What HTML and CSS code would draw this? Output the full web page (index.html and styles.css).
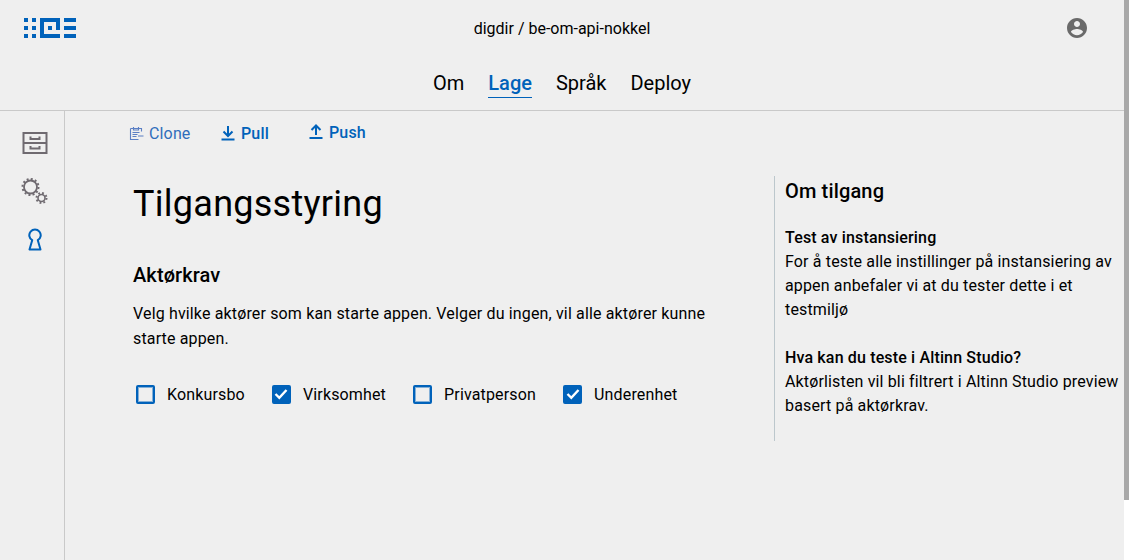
FILE: index.html
```html
<!DOCTYPE html>
<html lang="no">
<head>
<meta charset="utf-8">
<title>Tilgangsstyring</title>
<link rel="stylesheet" href="styles.css">
</head>
<body>
<div class="page">
<div class="app">
  <header class="topbar">
    <svg class="logo" width="52" height="20" viewBox="0 0 52 20" fill="#0062ba">
      <path d="M0 0h4v4H0zM8 0h4v4H8zM0 8h4v4H0zM8 8h4v4H8zM0 16h4v4H0zM8 16h4v4H8z"/>
      <path d="M16 0h20v12h-4V4H20v12h16v4H16z"/>
      <path d="M24 8h4v4h-4z"/>
      <path d="M40 0h12v4H40zM40 8h12v4H40zM40 16h12v4H40z"/>
    </svg>
    <div class="repo">digdir / be-om-api-nokkel</div>
    <svg class="avatar" width="24" height="24" viewBox="0 0 24 24" fill="#6a6a6a">
      <path d="M12 2C6.48 2 2 6.48 2 12s4.48 10 10 10 10-4.48 10-10S17.52 2 12 2zm0 3c1.66 0 3 1.34 3 3s-1.34 3-3 3-3-1.34-3-3 1.34-3 3-3zm0 14.2c-2.5 0-4.71-1.28-6-3.22.03-1.99 4-3.08 6-3.08s5.97 1.09 6 3.08c-1.29 1.94-3.5 3.22-6 3.22z"/>
    </svg>
  </header>
  <nav class="tabs">
    <a class="tab">Om</a>
    <a class="tab tab-active">Lage</a>
    <a class="tab">Språk</a>
    <a class="tab">Deploy</a>
  </nav>
  <div class="body">
    <aside class="side">
      <svg width="26" height="24" viewBox="0 0 26 24" fill="none" stroke="#6f6a70" stroke-width="2">
        <rect x="1.500" y="2" width="23" height="20"/>
        <path d="M1.500 12h23M8.500 5.500v2.500h9V5.500M8.500 15v2.500h9V15"/>
      </svg>
      <svg width="28" height="28" viewBox="0 0 28 28" fill="none" stroke="#6f6a70">
        <circle cx="9.500" cy="10" r="6.500" stroke-width="1.800"/>
        <circle cx="9.500" cy="10" r="8" stroke-width="2" stroke-dasharray="2 2.190"/>
        <circle cx="20.500" cy="21" r="3.500" stroke-width="1.600"/>
        <circle cx="20.500" cy="21" r="5" stroke-width="2" stroke-dasharray="1.800 2.130"/>
      </svg>
      <svg width="14" height="24" viewBox="0 0 14 24" fill="none" stroke="#0062ba" stroke-width="2">
        <path d="M1.500 22.500h11l-2.700-9.300a5.700 5.700 0 1 0-5.600 0z" stroke-linejoin="round"/>
      </svg>
    </aside>
    <main class="main">
      <div class="actions">
        <a class="action action-plain">
          <svg width="15" height="15" viewBox="0 0 15 15" fill="none" stroke="#5b7fc4" stroke-width="1.100"><path d="M1.500 2.500h11v3M1.500 2.500v11h8M4.500 1v3h5V1M3.500 6.500h7M3.500 8.500h5M3.500 10.500h4M9 10h5.500"/></svg>
          <span>Clone</span>
        </a>
        <a class="action action-pull">
          <svg width="16" height="16" viewBox="0 0 16 16" fill="none" stroke="#0062ba" stroke-width="2"><path d="M8 1v10M3.500 6.500 8 11l4.500-4.500M1.500 14.500h13"/></svg>
          <span>Pull</span>
        </a>
        <a class="action action-push">
          <svg width="16" height="16" viewBox="0 0 16 16" fill="none" stroke="#0062ba" stroke-width="2"><path d="M8 11V1.500M3.500 6 8 1.500 12.500 6M1.500 14h13"/></svg>
          <span>Push</span>
        </a>
      </div>
      <div class="columns">
        <section class="content">
          <h1>Tilgangsstyring</h1>
          <h2>Aktørkrav</h2>
          <p class="lead">Velg hvilke aktører som kan starte appen. Velger du ingen, vil alle aktører kunne starte appen.</p>
          <div class="checks">
            <label class="check"><span class="box"></span>Konkursbo</label>
            <label class="check"><span class="box box-on"><svg width="14" height="12" viewBox="0 0 14 12" fill="none" stroke="#fff" stroke-width="2.400"><path d="M1.500 6l3.800 3.800L12.500 2"/></svg></span>Virksomhet</label>
            <label class="check"><span class="box"></span>Privatperson</label>
            <label class="check"><span class="box box-on"><svg width="14" height="12" viewBox="0 0 14 12" fill="none" stroke="#fff" stroke-width="2.400"><path d="M1.500 6l3.800 3.800L12.500 2"/></svg></span>Underenhet</label>
          </div>
        </section>
        <aside class="info">
          <h3>Om tilgang</h3>
          <p><strong>Test av instansiering</strong><br>For å teste alle instillinger på instansiering av appen anbefaler vi at du tester dette i et testmiljø</p>
          <p><strong>Hva kan du teste i Altinn Studio?</strong><br>Aktørlisten vil bli filtrert i Altinn Studio preview basert på aktørkrav.</p>
        </aside>
      </div>
    </main>
  </div>
</div>
<div class="scrollbar"><div class="thumb"></div></div>
</div>
</body>
</html>
```
FILE: styles.css
```css
body {
  margin: 0;
  background: #efefef;
  color: #000;
  font-family: Roboto, "Liberation Sans", sans-serif;
  font-size: 16px;
  letter-spacing: 0.15px;
}
.page {
  display: flex;
  height: 100vh;
  overflow: hidden;
}
.app {
  flex: 1;
  min-width: 0;
  display: flex;
  flex-direction: column;
}
.scrollbar {
  width: 5px;
  flex: none;
  background: #fff;
}
.thumb {
  height: 500px;
  background: #a8a8a8;
}
.topbar {
  height: 56px;
  flex: none;
  display: grid;
  grid-template-columns: 1fr auto 1fr;
  align-items: center;
  padding: 0 24px;
}
.avatar {
  justify-self: end;
  margin-right: 11px;
}
.repo {
  letter-spacing: 0;
}
.tabs {
  flex: none;
  height: 38px;
  display: flex;
  justify-content: center;
  gap: 24px;
  border-bottom: 1px solid #c9c9c9;
  padding-top: 16px;
}
.tab {
  font-size: 20px;
  height: 25px;
  line-height: 23px;
  letter-spacing: 0;
}
.tab-active {
  color: #0062ba;
  font-weight: 500;
  border-bottom: 1px solid #0062ba;
}
.body {
  flex: 1;
  display: flex;
}
.side {
  width: 65px;
  box-sizing: border-box;
  border-right: 1px solid #c9c9c9;
  display: flex;
  flex-direction: column;
  align-items: center;
  padding-top: 20px;
  padding-left: 5px;
  gap: 22px;
}
.main {
  flex: 1;
  min-width: 0;
}
.actions {
  display: flex;
  align-items: center;
  height: 44px;
  padding-left: 64px;
}
.action {
  display: flex;
  align-items: center;
  gap: 4px;
  color: #0062ba;
}
.action-plain {
  color: #2f6dbb;
  width: 91px;
  gap: 5px;
}
.action-pull {
  font-weight: 500;
  width: 88px;
  gap: 5px;
}
.action-push {
  font-weight: 500;
  gap: 5px;
  margin-bottom: 2px;
}
.columns {
  display: flex;
  padding-top: 21px;
  padding-left: 68px;
}
.content {
  width: 641px;
  flex: none;
}
h1 {
  margin: 2px 0 0;
  font-size: 36px;
  font-weight: 400;
  line-height: 52px;
  letter-spacing: 0.27px;
}
h2 {
  margin: 32px 0 0;
  font-size: 20px;
  font-weight: 500;
  line-height: 26px;
  letter-spacing: 0.1px;
}
.lead {
  margin: 13px 0 0;
  max-width: 600px;
  line-height: 25px;
}
.checks {
  display: flex;
  margin-top: 31px;
}
.check {
  display: flex;
  align-items: center;
  height: 24px;
  margin-right: 24.100px;
}
.box {
  width: 19px;
  height: 19px;
  box-sizing: border-box;
  margin: 0 12px 0 3px;
  border: 2px solid #0062ba;
  border-radius: 2px;
  box-shadow: inset 0 0 0 1px rgba(0, 98, 186, 0.45);
  display: flex;
  align-items: center;
  justify-content: center;
}
.box-on {
  background: #0062ba;
}
.info {
  flex: none;
  width: 350px;
  box-sizing: border-box;
  border-left: 1px solid #bcc7cc;
  padding-left: 10px;
  height: 265px;
  line-height: 24px;
}
.info h3 {
  margin: 3px 0 23px;
  font-size: 20px;
  font-weight: 500;
  line-height: 24px;
}
.info p {
  margin: 0 0 24px;
}
.info strong {
  font-weight: 500;
}
```
